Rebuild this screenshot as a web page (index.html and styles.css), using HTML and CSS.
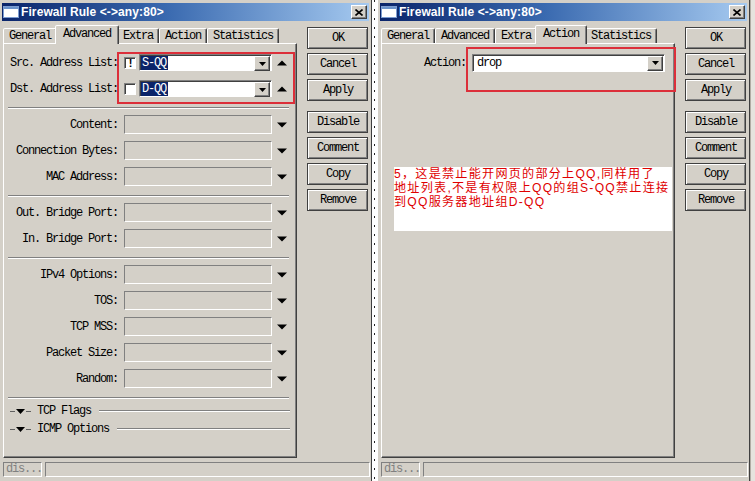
FILE: index.html
```html
<!DOCTYPE html>
<html>
<head>
<meta charset="utf-8">
<link rel="stylesheet" href="styles.css">
</head>
<body>
<div class="desk">
  <div class="win">
    <div class="titlebar">
      <svg class="ticon" viewBox="0 0 16 12"><rect x="0.5" y="0.5" width="15" height="11" fill="#fff" stroke="#7c9cd0"/><rect x="1" y="1" width="14" height="2" fill="#6c94cc"/></svg>
      <span class="ttext">Firewall Rule &lt;-&gt;any:80&gt;</span>
      <span class="tclose"><svg width="8" height="7" viewBox="0 0 8 7"><path d="M0.5 0.5L7.5 6.5M7.5 0.5L0.5 6.5" stroke="#000" stroke-width="1.6"/></svg></span>
    </div>
    <div class="main">
      <div class="leftcol">
        <div class="tabs">
          <div class="tab">General</div>
          <div class="tab active">Advanced</div>
          <div class="tab">Extra</div>
          <div class="tab">Action</div>
          <div class="tab">Statistics</div>
        </div>
        <div class="panel">
          <div class="grp">
            <div class="row">
              <span class="lbl">Src. Address List:</span>
              <span class="chk">!</span>
              <span class="inp"><span class="sel">S-QQ</span><span class="ddbtn"><svg width="7" height="4" viewBox="0 0 7 4"><path d="M0 0h7L3.5 4z"/></svg></span></span>
              <svg class="arr" viewBox="0 0 10 6"><path d="M0 5.5h10L5 0.5z"/></svg>
            </div>
            <div class="row">
              <span class="lbl">Dst. Address List:</span>
              <span class="chk"></span>
              <span class="inp"><span class="sel">D-QQ</span><span class="ddbtn"><svg width="7" height="4" viewBox="0 0 7 4"><path d="M0 0h7L3.5 4z"/></svg></span></span>
              <svg class="arr" viewBox="0 0 10 6"><path d="M0 5.5h10L5 0.5z"/></svg>
            </div>
          </div>
          <div class="sep"></div>
          <div class="grp">
            <div class="row"><span class="lbl">Content:</span><span class="fld"></span><svg class="arr" viewBox="0 0 10 6"><path d="M0 0.5h10L5 5.5z"/></svg></div>
            <div class="row"><span class="lbl">Connection Bytes:</span><span class="fld"></span><svg class="arr" viewBox="0 0 10 6"><path d="M0 0.5h10L5 5.5z"/></svg></div>
            <div class="row"><span class="lbl">MAC Address:</span><span class="fld"></span><svg class="arr" viewBox="0 0 10 6"><path d="M0 0.5h10L5 5.5z"/></svg></div>
          </div>
          <div class="sep"></div>
          <div class="grp">
            <div class="row"><span class="lbl">Out. Bridge Port:</span><span class="fld"></span><svg class="arr" viewBox="0 0 10 6"><path d="M0 0.5h10L5 5.5z"/></svg></div>
            <div class="row"><span class="lbl">In. Bridge Port:</span><span class="fld"></span><svg class="arr" viewBox="0 0 10 6"><path d="M0 0.5h10L5 5.5z"/></svg></div>
          </div>
          <div class="sep"></div>
          <div class="grp">
            <div class="row"><span class="lbl">IPv4 Options:</span><span class="fld"></span><svg class="arr" viewBox="0 0 10 6"><path d="M0 0.5h10L5 5.5z"/></svg></div>
            <div class="row"><span class="lbl">TOS:</span><span class="fld"></span><svg class="arr" viewBox="0 0 10 6"><path d="M0 0.5h10L5 5.5z"/></svg></div>
            <div class="row"><span class="lbl">TCP MSS:</span><span class="fld"></span><svg class="arr" viewBox="0 0 10 6"><path d="M0 0.5h10L5 5.5z"/></svg></div>
            <div class="row"><span class="lbl">Packet Size:</span><span class="fld"></span><svg class="arr" viewBox="0 0 10 6"><path d="M0 0.5h10L5 5.5z"/></svg></div>
            <div class="row"><span class="lbl">Random:</span><span class="fld"></span><svg class="arr" viewBox="0 0 10 6"><path d="M0 0.5h10L5 5.5z"/></svg></div>
          </div>
          <div class="sep"></div>
          <div class="coll"><span class="dash"></span><svg class="ctri" viewBox="0 0 9 5"><path d="M0 0h9L4.5 5z"/></svg><span class="dash"></span><span class="ctext">TCP Flags</span><span class="cline"></span></div>
          <div class="coll"><span class="dash"></span><svg class="ctri" viewBox="0 0 9 5"><path d="M0 0h9L4.5 5z"/></svg><span class="dash"></span><span class="ctext">ICMP Options</span><span class="cline"></span></div>
          <div class="redbox rb-left"></div>
        </div>
      </div>
      <div class="btns">
        <div class="btn">OK</div>
        <div class="btn">Cancel</div>
        <div class="btn">Apply</div>
        <div class="btn sp">Disable</div>
        <div class="btn">Comment</div>
        <div class="btn">Copy</div>
        <div class="btn">Remove</div>
      </div>
    </div>
    <div class="status"><span class="st1">dis...</span><span class="st2"></span></div>
  </div>

  <div class="gap"></div>

  <div class="win">
    <div class="titlebar">
      <svg class="ticon" viewBox="0 0 16 12"><rect x="0.5" y="0.5" width="15" height="11" fill="#fff" stroke="#7c9cd0"/><rect x="1" y="1" width="14" height="2" fill="#6c94cc"/></svg>
      <span class="ttext">Firewall Rule &lt;-&gt;any:80&gt;</span>
      <span class="tclose"><svg width="8" height="7" viewBox="0 0 8 7"><path d="M0.5 0.5L7.5 6.5M7.5 0.5L0.5 6.5" stroke="#000" stroke-width="1.6"/></svg></span>
    </div>
    <div class="main">
      <div class="leftcol">
        <div class="tabs">
          <div class="tab">General</div>
          <div class="tab">Advanced</div>
          <div class="tab">Extra</div>
          <div class="tab active">Action</div>
          <div class="tab">Statistics</div>
        </div>
        <div class="panel">
          <div class="row">
            <span class="lbl lbl-action">Action:</span>
            <span class="inp wide"><span class="val">drop</span><span class="ddbtn"><svg width="7" height="4" viewBox="0 0 7 4"><path d="M0 0h7L3.5 4z"/></svg></span></span>
          </div>
          <div class="redbox rb-right"></div>
          <div class="note"><div class="nl">5，这是禁止能开网页的部分上QQ,同样用了</div><div class="nl">地址列表,不是有权限上QQ的组S-QQ禁止连接</div><div class="nl">到QQ服务器地址组D-QQ</div></div>
        </div>
      </div>
      <div class="btns">
        <div class="btn">OK</div>
        <div class="btn">Cancel</div>
        <div class="btn">Apply</div>
        <div class="btn sp">Disable</div>
        <div class="btn">Comment</div>
        <div class="btn">Copy</div>
        <div class="btn">Remove</div>
      </div>
    </div>
    <div class="status"><span class="st1">dis...</span><span class="st2"></span></div>
  </div>
  <div class="sliver"></div>
</div>
</body>
</html>
```

FILE: styles.css
```css
* { box-sizing: border-box; }
html, body { margin: 0; padding: 0; }
body { width: 755px; height: 481px; overflow: hidden; background: #fff; }

.desk { display: flex; height: 481px; }

.win {
  width: 372px;
  height: 481px;
  flex: none;
  background: #d4d0c8;
  border-right: 1px solid #404040;
  padding: 3px 0 0 2px;
  display: flex;
  flex-direction: column;
  font-family: "Liberation Mono", monospace;
  font-size: 12px;
  letter-spacing: -1.2px;
  color: #000;
}

.gap {
  width: 6px;
  flex: none;
  background-color: #fff;
  background-image: repeating-linear-gradient(to bottom, #222 0 2px, transparent 2px 9px);
  background-size: 1px 100%;
  background-position: 2px 0;
  background-repeat: no-repeat;
}
.sliver { width: 5px; flex: none; background: #e6e3de; border-left: 1px solid #b0aca4; }

/* title bar */
.titlebar {
  height: 18px;
  width: 367px;
  display: flex;
  align-items: center;
  padding-left: 1px;
  background: linear-gradient(to right, #0a246a 0%, #3a6ab0 45%, #a6caf0 100%);
}
.ticon { width: 16px; height: 12px; margin-right: 2px; flex: none; }
.ttext {
  flex: 1;
  font-family: "Liberation Sans", Arial, sans-serif;
  font-weight: bold;
  font-size: 12px;
  letter-spacing: 0.1px;
  color: #fff;
  white-space: nowrap;
  line-height: 18px;
}
.tclose {
  width: 16px;
  height: 14px;
  margin-right: 2px;
  flex: none;
  background: #d4d0c8;
  border: 1px solid;
  border-color: #fff #404040 #404040 #fff;
  box-shadow: inset -1px -1px 0 #808080;
  display: flex;
  align-items: center;
  justify-content: center;
}

/* main area */
.main { display: flex; margin-top: 4px; margin-left: 1px; height: 433px; }
.leftcol { width: 294px; display: flex; flex-direction: column; }

.tabs { display: flex; align-items: flex-end; height: 18px; position: relative; z-index: 1; }
.tab {
  height: 15px;
  padding: 1px 5px 0;
  border: 1px solid;
  border-bottom: none;
  border-color: #fff #404040 transparent #fff;
  box-shadow: inset -1px 0 0 #808080;
  border-radius: 2px 2px 0 0;
  line-height: 13px;
  white-space: nowrap;
  background: #d4d0c8;
}
.tab.active {
  height: 19px;
  margin: 0 -2px -1px;
  padding: 1px 7px 0;
  line-height: 14px;
  position: relative;
  z-index: 2;
}

.panel {
  height: 415px;
  border: 1px solid;
  border-color: #fff #404040 #404040 #fff;
  box-shadow: inset -1px -1px 0 #808080;
  padding-top: 9px;
  position: relative;
  display: flex;
  flex-direction: column;
}

.grp { display: flex; flex-direction: column; gap: 7px; }
.row { display: flex; align-items: center; height: 19px; }
.lbl { width: 114px; margin-right: 6px; text-align: right; white-space: nowrap; flex: none; }
.lbl-action { width: 84px; }

.fld {
  width: 148px;
  height: 19px;
  flex: none;
  border: 1px solid;
  border-color: #808080 #fff #fff #808080;
  background: #d4d0c8;
}
.arr { width: 10px; height: 6px; margin-left: 5px; flex: none; display: block; }

.chk {
  width: 12px;
  height: 12px;
  flex: none;
  margin-right: 3px;
  background: #fff;
  border: 1px solid;
  border-color: #808080 #fff #fff #808080;
  box-shadow: inset 1px 1px 0 #404040;
  display: flex;
  align-items: center;
  justify-content: center;
  font-family: "Liberation Sans", Arial, sans-serif;
  font-weight: bold;
  font-size: 11px;
  letter-spacing: 0;
  line-height: 10px;
  padding-left: 1px;
}

.inp {
  width: 133px;
  height: 17px;
  flex: none;
  background: #fff;
  border: 1px solid;
  border-color: #808080 #fff #fff #808080;
  box-shadow: inset 1px 1px 0 #404040;
  display: flex;
  align-items: stretch;
  padding: 1px 1px 0 1px;
}
.inp.wide { width: 193px; height: 18px; }
.sel { background: #0a246a; color: #fff; padding: 0 2px 0 1px; line-height: 15px; }
.val { padding-left: 3px; line-height: 15px; }
.ddbtn {
  margin-left: auto;
  width: 16px;
  height: 15px;
  background: #d4d0c8;
  border: 1px solid;
  border-color: #fff #404040 #404040 #fff;
  box-shadow: inset -1px -1px 0 #808080;
  display: flex;
  align-items: center;
  justify-content: center;
}

.sep {
  height: 2px;
  border-top: 1px solid #808080;
  border-bottom: 1px solid #fff;
  margin: 9px 7px 6px 4px;
}

.coll { display: flex; align-items: center; height: 12px; margin: 0 6px 6px 6px; }
.dash { width: 5px; height: 1px; background: #606060; flex: none; }
.ctri { width: 9px; height: 5px; margin: 0 1px; flex: none; display: block; }
.ctext { margin-left: 6px; margin-right: 8px; white-space: nowrap; }
.cline { flex: 1; height: 2px; border-top: 1px solid #808080; border-bottom: 1px solid #fff; }

/* buttons */
.btns { width: 61px; margin-left: 10px; margin-top: 2px; display: flex; flex-direction: column; gap: 4px; }
.btn {
  height: 22px;
  border: 1px solid #404040;
  box-shadow: inset 1px 1px 0 #fff, inset -1px -1px 0 #808080;
  display: flex;
  align-items: center;
  justify-content: center;
  padding-left: 1px;
}
.btn.sp { margin-top: 6px; }

/* status bar */
.status { display: flex; gap: 3px; margin-top: 4px; margin-left: 1px; height: 15px; }
.st1, .st2 {
  height: 15px;
  border: 1px solid;
  border-color: #808080 #fff #fff #808080;
}
.st1 { width: 39px; color: #808080; padding-left: 2px; line-height: 13px; }
.st2 { width: 325px; }

/* annotations */
.redbox { position: absolute; border: 2px solid #dc2f3a; }
.rb-left { left: 113px; top: 8px; width: 178px; height: 52px; }
.rb-right { left: 84px; top: 3px; width: 210px; height: 45px; }

.note {
  position: absolute;
  left: 12px;
  top: 123px;
  width: 278px;
  height: 64px;
  background: #fff;
  color: #e00000;
  font-family: "Liberation Sans", "Noto Sans CJK SC", sans-serif;
  font-size: 12.1px;
  letter-spacing: 1.25px;
  padding-top: 0;
}
.nl { height: 14px; line-height: 14px; white-space: nowrap; }
```
